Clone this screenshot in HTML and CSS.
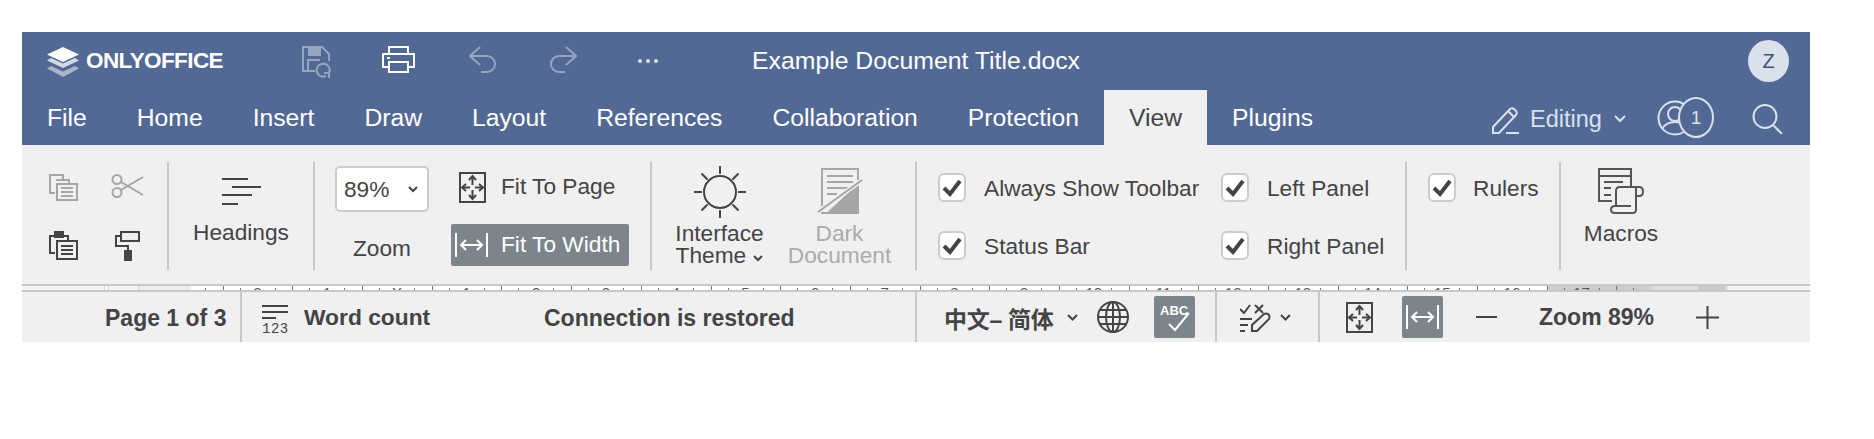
FILE: index.html
```html
<!DOCTYPE html>
<html lang="en">
<head>
<meta charset="utf-8">
<title>Example Document Title.docx</title>
<link rel="stylesheet" href="styles.css">
</head>
<body>
<div class="app">
  <header class="head">
    <div class="title-row">
      <svg class="logo-mark" width="32" height="30" viewBox="0 0 32 30"><path d="M16 0 32 7.500 16 15 0 7.500z" fill="#fff"/><path d="M4 11 16 16.500 28 11 32 13.500 16 21 0 13.500z" fill="#fff" opacity=".75"/><path d="M4 19 16 24.500 28 19 32 21.500 16 30 0 21.500z" fill="#fff" opacity=".5"/></svg>
      <span class="logo-text">ONLYOFFICE</span>
      <svg class="ic-save" width="31" height="32" viewBox="0 0 31 32" fill="none" stroke="#fff" stroke-width="2" opacity=".4"><path d="M13 25H1V1h19l7 7v7"/><path d="M7 1v8h11V1" fill="#fff"/><path d="M6 25V14h12"/><path d="M27 27a6.500 6.500 0 1 0-3 3"/><path d="M27 32v-5h-5"/></svg>
      <svg class="ic-print" width="33" height="27" viewBox="0 0 33 27" fill="none" stroke="#fff" stroke-width="2"><path d="M7 8V1h19v7"/><path d="M7 21H1V8h31v13h-6"/><path d="M7 16h19v10H7z"/><path d="M5 12h3"/></svg>
      <svg class="ic-undo" width="27" height="27" viewBox="0 0 27 27" fill="none" stroke="#fff" stroke-width="2" opacity=".4"><path d="M11 1 1 10l10 9"/><path d="M1 10h17a8 8 0 0 1 0 16h-6"/></svg>
      <svg class="ic-redo" width="27" height="27" viewBox="0 0 27 27" fill="none" stroke="#fff" stroke-width="2" opacity=".4"><path d="m16 1 10 9-10 9"/><path d="M26 10H9a8 8 0 0 0 0 16h6"/></svg>
      <svg class="ic-dots" width="22" height="4" viewBox="0 0 22 4" fill="#fff" opacity=".8"><circle cx="3" cy="2" r="2"/><circle cx="11" cy="2" r="2"/><circle cx="19" cy="2" r="2"/></svg>
      <span class="doc-title">Example Document Title.docx</span>
      <span class="avatar">Z</span>
    </div>
    <div class="tab-row">
      <nav class="tabs">
        <span class="tab">File</span>
        <span class="tab">Home</span>
        <span class="tab">Insert</span>
        <span class="tab">Draw</span>
        <span class="tab">Layout</span>
        <span class="tab">References</span>
        <span class="tab">Collaboration</span>
        <span class="tab">Protection</span>
        <span class="tab tab-on">View</span>
        <span class="tab">Plugins</span>
      </nav>
      <div class="tab-tools">
        <svg class="ic-pencil" width="27" height="27" viewBox="0 0 27 27" fill="none" stroke="#dbe1ec" stroke-width="2"><path d="M1 26v-6L18 2q2-1.500 4 0l2 2q1.500 2 0 4L7 26z"/><path d="m16 4 6 6"/><path d="M14 26h13"/></svg>
        <span class="mode">Editing</span>
        <svg class="chev-mode" width="12" height="8" viewBox="0 0 12 8" fill="none" stroke="#dbe1ec" stroke-width="2"><path d="m1 1 5 5 5-5"/></svg>
        <span class="users">
          <svg width="36" height="36" viewBox="0 0 36 36" fill="none" stroke="#dbe1ec" stroke-width="2"><circle cx="18" cy="18" r="16.500"/><circle cx="18" cy="14" r="7"/><path d="M5 29q4-7 13-7t13 7"/></svg>
          <span class="user-badge">1</span>
        </span>
        <svg class="ic-search" width="31" height="30" viewBox="0 0 31 30" fill="none" stroke="#dbe1ec" stroke-width="2"><circle cx="13" cy="12.500" r="11.500"/><path d="m21 21 9 9"/></svg>
      </div>
    </div>
  </header>

  <section class="toolbar">
    <div class="group g-clip">
      <svg width="29" height="27" viewBox="0 0 29 27" fill="none" stroke="#a6a6a6" stroke-width="2"><path d="M6 19H1V1h13v4"/><path d="M7 6h13v4"/><path d="M8 10h20v16H8z" fill="#f0f0f0"/><path d="M12 14h12M12 18h12M12 22h12"/></svg>
      <svg width="33" height="24" viewBox="0 0 33 24" fill="none" stroke="#a6a6a6" stroke-width="2"><circle cx="6" cy="5.500" r="4.500"/><circle cx="6" cy="18.500" r="4.500"/><path d="M10 8 32 21M10 16 32 3"/></svg>
      <svg width="29" height="29" viewBox="0 0 29 29" fill="none" stroke="#444" stroke-width="2"><path d="M6 22H1V5h18v4"/><path d="M6 1h8v5H6z" fill="#444"/><path d="M8 10h20v18H8z"/><path d="M12 15h12M12 19h12M12 23h12" stroke-width="2.200"/></svg>
      <svg width="25" height="30" viewBox="0 0 25 30" fill="none" stroke="#444" stroke-width="2"><path d="M6 1h18v9H6z"/><path d="M6 5H1v10h12v5"/><path d="M10 20h6v10h-6z" fill="#444"/></svg>
    </div>
    <i class="sep"></i>
    <div class="group g-big g-headings">
      <svg class="big-ic" width="39" height="27" viewBox="0 0 39 27" fill="none" stroke="#444" stroke-width="2"><path d="M0 1h26M10 9h29M0 17h30M0 26h16"/></svg>
      <span class="cap">Headings</span>
    </div>
    <i class="sep"></i>
    <div class="group g-zoom">
      <div class="zoom-col">
        <div class="select"><span>89%</span><svg width="10" height="7" viewBox="0 0 10 7" fill="none" stroke="#444" stroke-width="2"><path d="m1 1 4 4 4-4"/></svg></div>
        <span class="zoom-cap">Zoom</span>
      </div>
      <div class="fit-col">
        <div class="fit fit-page">
          <svg width="27" height="31" viewBox="0 0 27 31" fill="none" stroke="#444" stroke-width="2"><path d="M1 1h25v29H1z"/><path d="M13.500 5v8M13.500 18v8M4 15.500h7M16 15.500h7"/><path d="m10 8 3.500-4L17 8M10 23l3.500 4 3.500-4M7 12l-4 3.500L7 19M20 12l4 3.500L20 19"/></svg>
          <span>Fit To Page</span>
        </div>
        <div class="fit fit-on">
          <svg width="33" height="24" viewBox="0 0 33 24" fill="none" stroke="#fff" stroke-width="2"><path d="M1 0v24M32 0v24"/><path d="M6 12h21"/><path d="m11 7-5 5 5 5M22 7l5 5-5 5"/></svg>
          <span>Fit To Width</span>
        </div>
      </div>
    </div>
    <i class="sep"></i>
    <div class="group g-theme">
      <div class="theme-col">
        <svg class="sun" width="52" height="52" viewBox="0 0 52 52" fill="none" stroke="#444" stroke-width="2"><circle cx="26" cy="26" r="16"/><path d="M26 0v8M26 44v8M0 26h8M44 26h8M7.500 7.500l6 6M38.500 38.500l6 6M7.500 44.500l6-6M38.500 13.500l6-6"/></svg>
        <span class="cap two">Interface<br>Theme <svg width="10" height="7" viewBox="0 0 10 7" fill="none" stroke="#444" stroke-width="2"><path d="m1 1 4 4 4-4"/></svg></span>
      </div>
      <div class="theme-col off">
        <svg class="doc-ic" width="46" height="46" viewBox="0 0 46 46" fill="none" stroke="#a6a6a6" stroke-width="2"><path d="M5 1h36v44H5z"/><path d="M10 8h26M10 14h26M10 20h26M10 26h10"/><path d="M41 17 11 45h30z" fill="#a6a6a6"/><path d="M1 44 45 12" stroke="#f0f0f0" stroke-width="5"/><path d="M1 44 45 12"/></svg>
        <span class="cap two">Dark<br>Document</span>
      </div>
    </div>
    <i class="sep"></i>
    <div class="group g-checks">
      <label class="check"><i class="box"><svg width="20" height="18" viewBox="0 0 20 18" fill="none" stroke="#444" stroke-width="4"><path d="m2 9 6 6L18 2"/></svg></i><span>Always Show Toolbar</span></label>
      <label class="check"><i class="box"><svg width="20" height="18" viewBox="0 0 20 18" fill="none" stroke="#444" stroke-width="4"><path d="m2 9 6 6L18 2"/></svg></i><span>Left Panel</span></label>
      <label class="check"><i class="box"><svg width="20" height="18" viewBox="0 0 20 18" fill="none" stroke="#444" stroke-width="4"><path d="m2 9 6 6L18 2"/></svg></i><span>Status Bar</span></label>
      <label class="check"><i class="box"><svg width="20" height="18" viewBox="0 0 20 18" fill="none" stroke="#444" stroke-width="4"><path d="m2 9 6 6L18 2"/></svg></i><span>Right Panel</span></label>
    </div>
    <i class="sep"></i>
    <div class="group g-rulers">
      <label class="check"><i class="box"><svg width="20" height="18" viewBox="0 0 20 18" fill="none" stroke="#444" stroke-width="4"><path d="m2 9 6 6L18 2"/></svg></i><span>Rulers</span></label>
    </div>
    <i class="sep"></i>
    <div class="group g-big g-macros">
      <svg class="macro-ic" width="46" height="46" viewBox="0 0 46 46" fill="none" stroke="#555" stroke-width="2"><path d="M33 18V1H1v32h13"/><path d="M1 8h32"/><path d="M6 14h19M6 20h7M6 27h7"/><path d="M18 38V23q0-4 4-4h19q4 0 4 4.500T41 28h-3"/><path d="M38 20v22q0 3-4 3H17q-4 0-4-3.500t4-3.500h16"/></svg>
      <span class="cap">Macros</span>
    </div>
  </section>

  <div class="ruler">
    <div class="cell lead"></div>
    <div class="cell">2</div><div class="cell">1</div><div class="cell">X</div><div class="cell">1</div><div class="cell">2</div><div class="cell">3</div><div class="cell">4</div><div class="cell">5</div><div class="cell">6</div><div class="cell">7</div><div class="cell">8</div><div class="cell">9</div><div class="cell">10</div><div class="cell">11</div><div class="cell">12</div><div class="cell">13</div><div class="cell">14</div><div class="cell">15</div><div class="cell">16</div><div class="cell">17</div>
    <div class="cell tail"></div>
  </div>

  <footer class="status">
    <span class="page-no">Page 1 of 3</span>
    <i class="sep-s"></i>
    <svg class="ic-count" width="26" height="29" viewBox="0 0 26 29" fill="none"><path d="M0 1h26M0 7h26M0 13h14" stroke="#444" stroke-width="2"/><text x="0" y="28" class="count-digits">123</text></svg>
    <span class="word-count">Word count</span>
    <span class="conn">Connection is restored</span>
    <i class="sep-s sep-lang"></i>
    <span class="lang">中文– 简体</span>
    <svg class="chev-s" width="11" height="7" viewBox="0 0 11 7" fill="none" stroke="#444" stroke-width="2"><path d="m1 1 4.500 4.500L10 1"/></svg>
    <svg class="ic-globe" width="32" height="32" viewBox="0 0 32 32" fill="none" stroke="#444" stroke-width="2"><circle cx="16" cy="16" r="15"/><ellipse cx="16" cy="16" rx="7" ry="15"/><path d="M16 1v30M1 16h30M3 9h26M3 23h26"/></svg>
    <span class="btn-on btn-spell"><svg width="34" height="34" viewBox="0 0 34 34" fill="none"><text x="2" y="15" class="abc">ABC</text><path d="m11 24 6 6L31 13" stroke="#fff" stroke-width="2"/></svg></span>
    <i class="sep-s sep-track"></i>
    <svg class="ic-track" width="31" height="29" viewBox="0 0 31 29" fill="none" stroke="#444" stroke-width="2"><path d="m0 6 4 4 6-8M15 2l8 8M23 2l-8 8"/><path d="M0 16h12M0 22h8M0 28h5"/><path d="M12 28v-6L24 11q2-1 4 0l1 1q1 2 0 4L17 28z"/></svg>
    <svg class="chev-s chev-track" width="11" height="7" viewBox="0 0 11 7" fill="none" stroke="#444" stroke-width="2"><path d="m1 1 4.500 4.500L10 1"/></svg>
    <i class="sep-s sep-zoom"></i>
    <svg class="ic-fit" width="27" height="31" viewBox="0 0 27 31" fill="none" stroke="#444" stroke-width="2"><path d="M1 1h25v29H1z"/><path d="M13.500 5v8M13.500 18v8M4 15.500h7M16 15.500h7"/><path d="m10 8 3.500-4L17 8M10 23l3.500 4 3.500-4M7 12l-4 3.500L7 19M20 12l4 3.500L20 19"/></svg>
    <span class="btn-on btn-width"><svg width="33" height="24" viewBox="0 0 33 24" fill="none" stroke="#fff" stroke-width="2"><path d="M1 0v24M32 0v24"/><path d="M6 12h21"/><path d="m11 7-5 5 5 5M22 7l5 5-5 5"/></svg></span>
    <svg class="ic-minus" width="21" height="2" viewBox="0 0 21 2"><path d="M0 1h21" stroke="#444" stroke-width="2"/></svg>
    <span class="zoom-val">Zoom 89%</span>
    <svg class="ic-plus" width="23" height="23" viewBox="0 0 23 23" fill="none" stroke="#444" stroke-width="2"><path d="M0 11.500h23M11.500 0v23"/></svg>
  </footer>
</div>
</body>
</html>
```

FILE: styles.css
```css
* { box-sizing: border-box; }
html, body { margin: 0; background: #fff; }
body { padding: 32px 0 0 22px; font-family: "Liberation Sans", Arial, sans-serif; color: #444; }
svg { display: block; flex: none; }
i { font-style: normal; }

.app { width: 1788px; }

/* header */
.head { background: #526995; color: #fff; height: 113px; }
.title-row { height: 58px; display: flex; align-items: center; }
.logo-mark { margin: 2px 0 0 25px; }
.logo-text { margin-left: 7px; font-size: 22.500px; font-weight: 700; letter-spacing: -.6px; width: 139px; white-space: nowrap; }
.ic-save { margin: 2px 0 0 77px; }
.ic-print { margin: -3px 0 0 49px; }
.ic-undo { margin: -3px 0 0 54px; }
.ic-redo { margin: -3px 0 0 54px; }
.ic-dots { margin: 0 0 0 60px; }
.doc-title { margin-left: 93px; font-size: 24.800px; width: 330px; white-space: nowrap; }
.avatar { margin-left: 666px; width: 41px; height: 42px; border-radius: 50%; background: #dbe1ec; color: #445278; font-size: 20px; display: flex; align-items: center; justify-content: center; }

.tab-row { height: 55px; display: flex; align-items: stretch; }
.tabs { display: flex; }
.tab { padding: 0 25px; font-size: 24.700px; line-height: 56px; white-space: nowrap; }
.tab-on { background: #f0f0f0; color: #444; }
.tab-tools { display: flex; align-items: center; color: #dbe1ec; }
.ic-pencil { margin: 6px 0 0 154px; }
.mode { margin: 4px 0 0 11px; font-size: 23.500px; }
.chev-mode { margin: 2px 0 0 12px; }
.users { position: relative; margin: 0 0 0 31px; width: 57px; height: 41px; display: flex; align-items: center; }
.user-badge { position: absolute; left: 21px; top: 0; width: 36px; height: 41px; border: 2px solid #dbe1ec; border-radius: 50%; background: #526995; font-size: 19px; display: flex; align-items: center; justify-content: center; }
.ic-search { margin: 2px 0 0 38px; }

/* toolbar */
.toolbar { height: 139px; background: #f0f0f0; padding-top: 17px; display: flex; align-items: flex-start; }
.sep { flex: none; width: 2px; height: 108px; background: #c8c8c8; }
.group { flex: none; height: 108px; }
.cap { font-size: 22.700px; line-height: 22px; text-align: center; white-space: nowrap; }
.cap svg { display: inline-block; vertical-align: 1px; margin-left: 1px; }

.g-clip { width: 145px; padding: 12px 0 0 27px; display: grid; grid-template-columns: 29px 33px; column-gap: 33px; grid-template-rows: 29px 29px; row-gap: 28px; justify-items: center; }
.g-big { display: flex; flex-direction: column; align-items: center; }
.g-headings { width: 144px; padding-top: 16px; }
.big-ic { margin-bottom: 16px; }
.g-macros { width: 120px; padding-top: 6px; }
.macro-ic { margin-bottom: 8px; }

.g-zoom { width: 335px; padding: 4px 0 0 20px; display: flex; gap: 22px; }
.zoom-col { width: 94px; display: flex; flex-direction: column; align-items: center; }
.select { width: 94px; height: 46px; background: #fff; border: 2px solid #ccc; border-radius: 5px; display: flex; align-items: center; justify-content: space-between; padding: 0 9px 0 7px; font-size: 22.700px; }
.zoom-cap { margin-top: 23px; font-size: 22.700px; line-height: 26px; }
.fit-col { width: 178px; display: flex; flex-direction: column; }
.fit { display: flex; align-items: center; font-size: 22.700px; white-space: nowrap; }
.fit-page { height: 31px; margin: 6px 0 0 8px; gap: 15px; }
.fit-page span { margin-top: -2px; }
.fit-on { height: 42px; margin-top: 21px; padding-left: 4px; gap: 13px; background: #7d858c; color: #fff; border-radius: 2px; }
.fit-on span { margin-top: -2px; }

.g-theme { width: 263px; padding-top: 4px; display: grid; grid-template-columns: 135px 105px; }
.theme-col { display: flex; flex-direction: column; align-items: center; }
.sun { margin-bottom: 4px; }
.theme-col.off { color: #ababab; padding-top: 2px; }
.doc-ic { margin-bottom: 8px; }

.g-checks { width: 488px; padding: 11px 0 0 21px; display: grid; grid-template-columns: 283px 1fr; grid-template-rows: 29px 29px; row-gap: 29px; }
.g-rulers { width: 152px; padding: 11px 0 0 21px; }
.check { display: flex; align-items: center; height: 29px; gap: 18px; font-size: 22.700px; white-space: nowrap; }
.check span { padding-top: 1px; }
.box { flex: none; width: 28px; height: 29px; background: #fff; border: 2px solid #ccc; border-radius: 6px; display: flex; align-items: center; justify-content: center; }
.g-rulers .check { gap: 17px; }

/* ruler */
.ruler { height: 8px; border-top: 2px solid #c8c8c8; border-bottom: 2px solid #c8c8c8; padding-left: 131px; display: flex; overflow: hidden;
  background: linear-gradient(90deg, #f4f4f4 0 82px, #d8d8d8 82px 83px, #f4f4f4 83px 86px, #d8d8d8 86px 87px, #f4f4f4 87px 116px, #d8d8d8 116px 117px, #ececec 117px 169px, #fff 169px 1525px, #ccc 1525px 1628px, #ddd 1630px 1676px, #c8c8c8 1676px 1703px, #f4f4f4 1706px); }
.cell { flex: none; width: 69.700px; font-size: 15px; line-height: 15px; margin-top: -1px; text-align: center; color: #555;
  background: linear-gradient(#777, #777) no-repeat 0 1px / 1px 4px, linear-gradient(#777, #777) no-repeat 17px 3px / 1px 2px, linear-gradient(#777, #777) no-repeat 52px 3px / 1px 2px; }
.lead { background: linear-gradient(#777, #777) no-repeat 52px 3px / 1px 2px; }
.tail { width: 30px; background: linear-gradient(#777, #777) no-repeat 0 1px / 1px 4px, linear-gradient(#777, #777) no-repeat 17px 3px / 1px 2px; }

/* status bar */
.status { height: 50px; background: #f0f0f0; display: flex; align-items: center; font-size: 23px; font-weight: 700; white-space: nowrap; }
.sep-s { flex: none; width: 2px; height: 50px; background: #c8c8c8; }
.page-no { margin: 2px 0 0 83px; width: 135px; }
.ic-count { margin: 4px 0 0 20px; }
.word-count { margin: 0 0 0 16px; width: 126px; font-size: 22.800px; }
.conn { margin: 2px 0 0 114px; width: 252px; }
.sep-lang { margin-left: 119px; }
.lang { margin: 2px 0 0 27px; width: 110px; letter-spacing: -.3px; font-family: "Liberation Sans", "Noto Sans CJK SC", sans-serif; }
.chev-s { margin: 0 0 0 13px; }
.ic-globe { margin-left: 19px; }
.btn-on { flex: none; height: 42px; width: 41px; background: #7d858c; border-radius: 2px; display: flex; align-items: center; justify-content: center; }
.btn-spell { margin-left: 25px; }
.sep-track { margin-left: 20px; }
.ic-track { margin-left: 23px; }
.chev-track { margin-left: 9px; }
.sep-zoom { margin-left: 27px; }
.ic-fit { margin-left: 26px; }
.btn-width { margin-left: 29px; }
.ic-minus { margin-left: 33px; }
.zoom-val { margin: 0 0 0 42px; width: 115px; }
.ic-plus { margin-left: 42px; }
.count-digits { font: 400 14px "Liberation Mono", monospace; letter-spacing: .5px; fill: #444; }
.abc { font: 700 13px "Liberation Sans", sans-serif; fill: #fff; }
```
